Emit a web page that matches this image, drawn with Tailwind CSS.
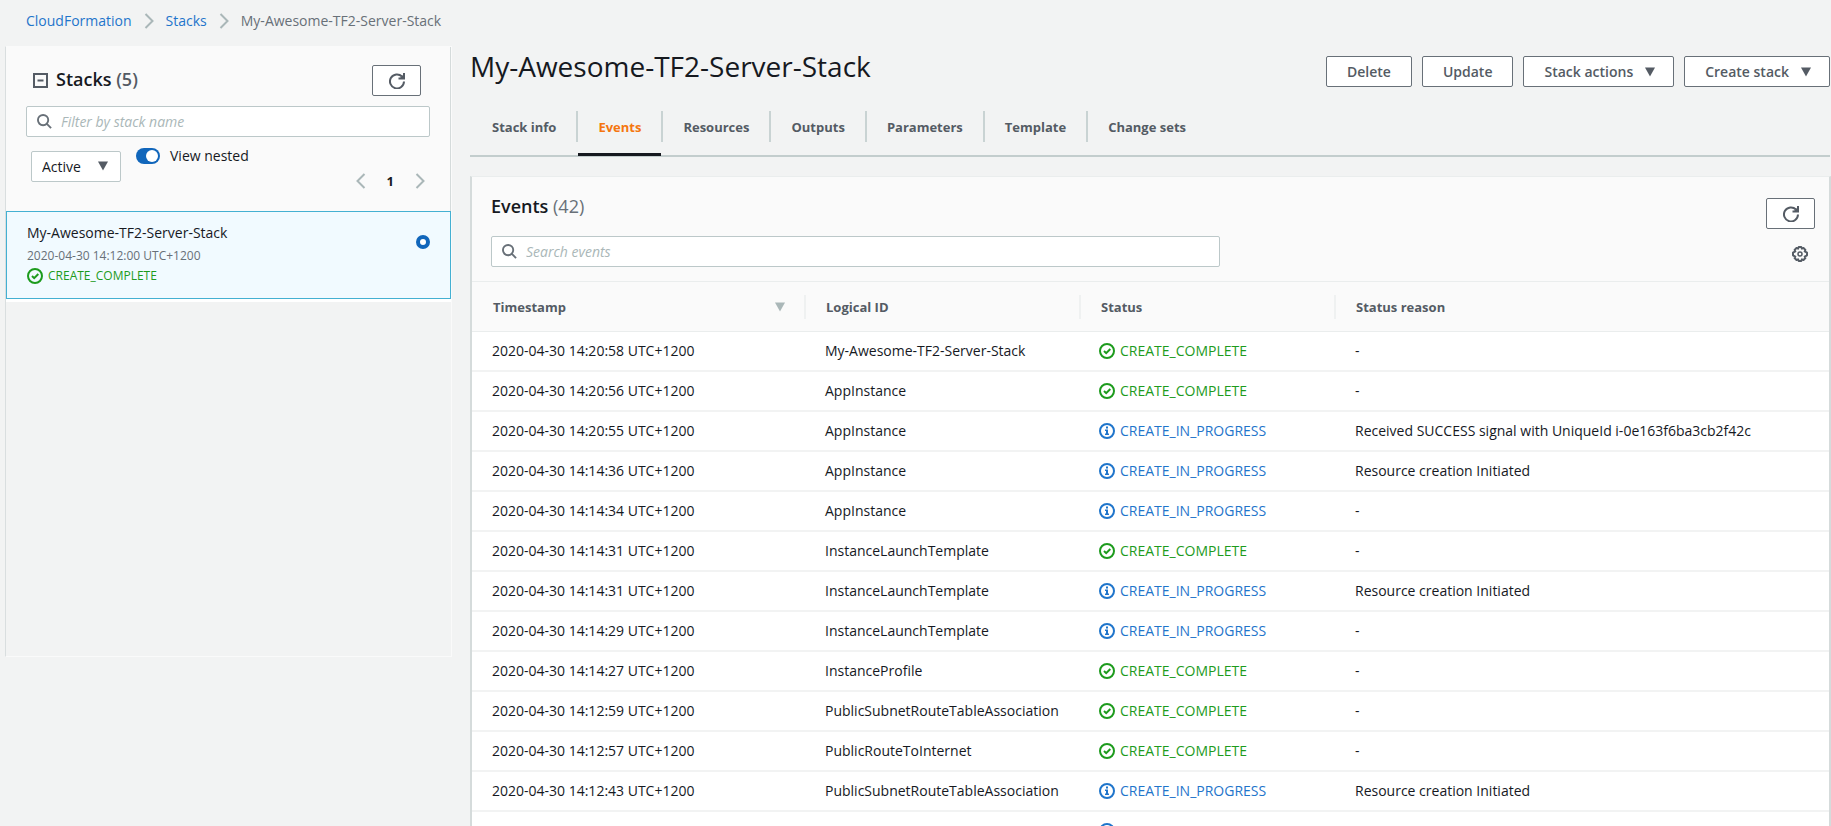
<!DOCTYPE html>
<html lang="en">
<head>
<meta charset="utf-8">
<meta name="viewport" content="width=device-width, initial-scale=1">
<title>CloudFormation - My-Awesome-TF2-Server-Stack</title>
<script src="https://cdn.jsdelivr.net/npm/@tailwindcss/browser@4"></script>
</head>
<body class="flex h-screen flex-col overflow-hidden bg-[#f2f3f3] font-['Open_Sans','Noto_Sans',sans-serif] text-[14px] leading-5 font-medium text-[#16191f]">
<svg class="hidden" xmlns="http://www.w3.org/2000/svg">
  <symbol id="ok" viewBox="0 0 16 16"><circle cx="8" cy="8" r="7" fill="none" stroke="currentColor" stroke-width="2"/><path d="M5 8l2.200 2.200L11.300 6" fill="none" stroke="currentColor" stroke-width="2"/></symbol>
  <symbol id="info" viewBox="0 0 16 16"><circle cx="8" cy="8" r="7" fill="none" stroke="currentColor" stroke-width="2"/><path d="M7 3.600h2v2H7zM6 6.600h3v4h1V12H6v-1.400h1V8H6z" fill="currentColor"/></symbol>
  <symbol id="refresh" viewBox="0 0 16 16"><path d="M15 8.500A7 7 0 1 1 13 3.500" fill="none" stroke="currentColor" stroke-width="2"/><path d="M15 0v5.500H9.500" fill="none" stroke="currentColor" stroke-width="2"/><path d="M11 5l4-4v4z" fill="currentColor"/></symbol>
  <symbol id="search" viewBox="0 0 16 16"><circle cx="6.500" cy="6.500" r="5.500" fill="none" stroke="currentColor" stroke-width="2"/><path d="M10.500 10.500L15 15" stroke="currentColor" stroke-width="2"/></symbol>
  <symbol id="down" viewBox="0 0 10 10"><path d="M0 0.500h10L5 9.500z" fill="currentColor"/></symbol>
  <symbol id="right" viewBox="0 0 10 16"><path d="M1.500 1L8.500 8l-7 7" fill="none" stroke="currentColor" stroke-width="2"/></symbol>
  <symbol id="left" viewBox="0 0 10 16"><path d="M8.500 1L1.500 8l7 7" fill="none" stroke="currentColor" stroke-width="2"/></symbol>
</svg>

<nav aria-label="Breadcrumb" class="flex shrink-0 items-center gap-3 px-[26px] pt-[11px] pb-[15px]">
  <a href="#" class="text-[#1f75cb]">CloudFormation</a>
  <svg class="h-4 w-[10px] text-[#aab7b8]"><use href="#right"/></svg>
  <a href="#" class="text-[#1f75cb]">Stacks</a>
  <svg class="h-4 w-[10px] text-[#aab7b8]"><use href="#right"/></svg>
  <span class="text-[#687078]">My-Awesome-TF2-Server-Stack</span>
</nav>

<div class="flex min-h-0 grow">
  <aside class="ml-[5px] flex min-h-[74vh] w-[447px] shrink-0 flex-col self-start border border-[#fafafa] border-l-[#d9dedf]">
    <div class="border-r border-[#d5dbdb] bg-[#fafafa] px-5 pt-[18px] pb-5">
      <div class="flex items-center">
        <svg class="ml-[7px] h-[15px] w-[15px] text-[#545b64]" viewBox="0 0 15 15"><path d="M1 1h13v13H1zM4.500 7.500h6" fill="none" stroke="currentColor" stroke-width="2"/></svg>
        <h2 class="ml-2 pb-[3px] text-[18px] leading-6 font-semibold">Stacks <span class="text-[#545b64]">(5)</span></h2>
        <button aria-label="Refresh stacks" class="mr-[9px] ml-auto flex h-[31px] w-[49px] items-center justify-center rounded-[2px] border border-[#687078] bg-white text-[#545b64]"><svg class="h-4 w-4"><use href="#refresh"/></svg></button>
      </div>
      <div class="mt-[10px] flex h-[31px] items-center rounded-[2px] border border-[#bcc8c9] bg-white pl-[10px]">
        <svg class="h-[15px] w-[15px] shrink-0 text-[#687078]"><use href="#search"/></svg>
        <input aria-label="Filter by stack name" placeholder="Filter by stack name" class="ml-[9px] min-w-0 grow bg-transparent italic outline-none placeholder:text-[#aab7b8]">
      </div>
      <div class="flex items-start">
        <div class="relative mt-[14px] ml-[5px]">
          <select aria-label="Stack status" class="block h-[31px] w-[90px] appearance-none rounded-[2px] border border-[#bcc8c9] bg-white pl-[10px]"><option>Active</option></select>
          <svg class="pointer-events-none absolute top-[10px] right-[13px] h-[10px] w-[10px] text-[#545b64]"><use href="#down"/></svg>
        </div>
        <label class="mt-[9px] ml-[15px] flex items-center gap-[10px]">
          <input type="checkbox" role="switch" checked class="flex h-4 w-6 appearance-none items-center rounded-full bg-[#1166bb] pl-[10px] before:h-3 before:w-3 before:rounded-full before:bg-white">
          View nested
        </label>
        <div class="mt-[34px] mr-[5px] ml-auto flex items-center gap-[21px]">
          <button aria-label="Previous page" class="text-[#aab7b8]"><svg class="h-4 w-[10px]"><use href="#left"/></svg></button>
          <span class="text-[13px] font-bold">1</span>
          <button aria-label="Next page" class="text-[#aab7b8]"><svg class="h-4 w-[10px]"><use href="#right"/></svg></button>
        </div>
      </div>
    </div>
    <label class="flex items-start justify-between border border-[#44b0d2] bg-[#f1faff] pt-[11px] pr-[20px] pb-3 pl-5">
      <span>
        <span class="block">My-Awesome-TF2-Server-Stack</span>
        <span class="mt-[3px] block text-[12px] text-[#687078]">2020-04-30 14:12:00 UTC+1200</span>
        <span class="flex items-center gap-[5px] text-[12px] text-[#1d9b1d]"><svg class="h-4 w-4"><use href="#ok"/></svg>CREATE_COMPLETE</span>
      </span>
      <input type="radio" name="stack" checked class="mt-[12px] h-[14px] w-[14px] appearance-none rounded-full border-4 border-[#1166bb] bg-white">
    </label>
    <div class="h-[3px] bg-white"></div>
  </aside>

  <main class="ml-[18px] flex min-w-0 grow flex-col">
    <header class="flex shrink-0 items-start justify-between pr-px">
      <h1 class="text-[28px] leading-[40px] font-normal">My-Awesome-TF2-Server-Stack</h1>
      <div class="mt-[10px] flex gap-[10px] font-semibold text-[#545b64]">
        <button class="h-[31px] rounded-[2px] border border-[#687078] bg-white px-5">Delete</button>
        <button class="h-[31px] rounded-[2px] border border-[#687078] bg-white px-5">Update</button>
        <button class="flex h-[31px] items-center gap-3 rounded-[2px] border border-[#687078] bg-white pr-[18px] pl-5">Stack actions<svg class="h-[10px] w-[10px]"><use href="#down"/></svg></button>
        <button class="flex h-[31px] items-center gap-3 rounded-[2px] border border-[#687078] bg-white pr-[18px] pl-5">Create stack<svg class="h-[10px] w-[10px]"><use href="#down"/></svg></button>
      </div>
    </header>

    <div role="tablist" class="mt-6 mr-px flex shrink-0 border-b-2 border-[#c3cdcd] text-[13px] font-bold text-[#545b64]">
      <button role="tab" class="mb-[13px] h-[31px] border-r-2 border-[#c9d3d3] pr-5 pl-[22px]">Stack info</button>
      <button role="tab" aria-selected="true" class="relative mb-[13px] h-[31px] border-r-2 border-[#c9d3d3] px-5 text-[#f5760f] after:absolute after:right-0 after:bottom-[-14px] after:left-0 after:h-[3px] after:bg-[#16191f]">Events</button>
      <button role="tab" class="mb-[13px] h-[31px] border-r-2 border-[#c9d3d3] px-5">Resources</button>
      <button role="tab" class="mb-[13px] h-[31px] border-r-2 border-[#c9d3d3] px-5">Outputs</button>
      <button role="tab" class="mb-[13px] h-[31px] border-r-2 border-[#c9d3d3] px-5">Parameters</button>
      <button role="tab" class="mb-[13px] h-[31px] border-r-2 border-[#c9d3d3] px-5">Template</button>
      <button role="tab" class="mb-[13px] h-[31px] px-5">Change sets</button>
    </div>

    <section class="mt-[19px] min-h-0 grow border-x-2 border-t border-[#d5dbdb] border-t-[#eaeded] bg-white">
      <div class="flex items-start justify-between bg-[#fafafa] pt-[17px] pr-[14px] pb-[14px] pl-[19px]">
        <div class="w-[56%]">
          <h2 class="text-[18px] leading-6 font-semibold">Events <span class="font-normal text-[#687078]">(42)</span></h2>
          <div class="mt-[18px] mr-[12px] flex h-[31px] items-center rounded-[2px] border border-[#bcc8c9] bg-white pl-[10px]">
            <svg class="h-[15px] w-[15px] shrink-0 text-[#687078]"><use href="#search"/></svg>
            <input aria-label="Search events" placeholder="Search events" class="ml-[9px] min-w-0 grow bg-transparent italic outline-none placeholder:text-[#aab7b8]">
          </div>
        </div>
        <div class="flex flex-col items-end pt-1 text-[#545b64]">
          <button aria-label="Refresh events" class="flex h-[31px] w-[49px] items-center justify-center rounded-[2px] border border-[#687078] bg-white"><svg class="h-4 w-4"><use href="#refresh"/></svg></button>
          <button aria-label="Preferences" class="mt-[17px] mr-[7px]"><svg class="h-4 w-4" viewBox="0 0 16 16" fill="none" stroke="currentColor"><path stroke-width="2" stroke-linejoin="round" d="M6.700 1h2.600l.6 1.600 1.600-.6 1.900 1.900-.7 1.500 2.300 1.300v2.600l-2.300 1.300.7 1.500-1.900 1.900-1.600-.6-.6 1.600H6.700l-.6-1.600-1.600.6-1.900-1.900.7-1.500L1 9.300V6.700l2.300-1.300-.7-1.500L4.500 2l1.600.6z"/><circle cx="8" cy="8" r="2" stroke-width="1.500"/></svg></button>
        </div>
      </div>
      <table class="w-full table-fixed border-separate border-spacing-0 text-left">
        <colgroup><col class="w-[334px]"><col class="w-[275px]"><col class="w-[255px]"><col></colgroup>
        <thead class="bg-[#fafafa] text-[13px] text-[#545b64]">
          <tr class="h-[51px]">
            <th class="border-y border-[#eaeded] p-0"><div class="flex h-6 items-center justify-between border-r-2 border-[#eff1f1] pr-[19px] pl-[21px]">Timestamp<svg class="h-[10px] w-[10px] text-[#aab7b8]"><use href="#down"/></svg></div></th>
            <th class="border-y border-[#eaeded] p-0"><div class="flex h-6 items-center border-r-2 border-[#eff1f1] pl-5">Logical ID</div></th>
            <th class="border-y border-[#eaeded] p-0"><div class="flex h-6 items-center border-r-2 border-[#eff1f1] pl-5">Status</div></th>
            <th class="border-y border-[#eaeded] p-0"><div class="flex h-6 items-center pl-5">Status reason</div></th>
          </tr>
        </thead>
        <tbody id="events"></tbody>
      </table>
    </section>
  </main>
</div>

<script>
const events = [
  ["2020-04-30 14:20:58 UTC+1200", "My-Awesome-TF2-Server-Stack", "CREATE_COMPLETE", "-"],
  ["2020-04-30 14:20:56 UTC+1200", "AppInstance", "CREATE_COMPLETE", "-"],
  ["2020-04-30 14:20:55 UTC+1200", "AppInstance", "CREATE_IN_PROGRESS", "Received SUCCESS signal with UniqueId i-0e163f6ba3cb2f42c"],
  ["2020-04-30 14:14:36 UTC+1200", "AppInstance", "CREATE_IN_PROGRESS", "Resource creation Initiated"],
  ["2020-04-30 14:14:34 UTC+1200", "AppInstance", "CREATE_IN_PROGRESS", "-"],
  ["2020-04-30 14:14:31 UTC+1200", "InstanceLaunchTemplate", "CREATE_COMPLETE", "-"],
  ["2020-04-30 14:14:31 UTC+1200", "InstanceLaunchTemplate", "CREATE_IN_PROGRESS", "Resource creation Initiated"],
  ["2020-04-30 14:14:29 UTC+1200", "InstanceLaunchTemplate", "CREATE_IN_PROGRESS", "-"],
  ["2020-04-30 14:14:27 UTC+1200", "InstanceProfile", "CREATE_COMPLETE", "-"],
  ["2020-04-30 14:12:59 UTC+1200", "PublicSubnetRouteTableAssociation", "CREATE_COMPLETE", "-"],
  ["2020-04-30 14:12:57 UTC+1200", "PublicRouteToInternet", "CREATE_COMPLETE", "-"],
  ["2020-04-30 14:12:43 UTC+1200", "PublicSubnetRouteTableAssociation", "CREATE_IN_PROGRESS", "Resource creation Initiated"],
  ["", "", "", ""]
];
document.getElementById("events").innerHTML = events.map(([time, id, status, reason]) => {
  const done = status === "CREATE_COMPLETE";
  return `
  <tr class="h-10">
    <td class="border-b-2 border-[#f2f3f3] p-0 pl-5">${time}</td>
    <td class="border-b-2 border-[#f2f3f3] p-0 pl-[19px]">${id}</td>
    <td class="border-b-2 border-[#f2f3f3] p-0 pl-[18px]"><span class="${done ? "flex items-center gap-[5px] text-[#1d9b1d]" : "flex items-center gap-[5px] text-[#1f75cb]"}"><svg class="h-4 w-4"><use href="${done ? "#ok" : "#info"}"/></svg>${status}</span></td>
    <td class="border-b-2 border-[#f2f3f3] p-0 pl-[19px]">${reason}</td>
  </tr>`;
}).join("");
</script>
</body>
</html>
